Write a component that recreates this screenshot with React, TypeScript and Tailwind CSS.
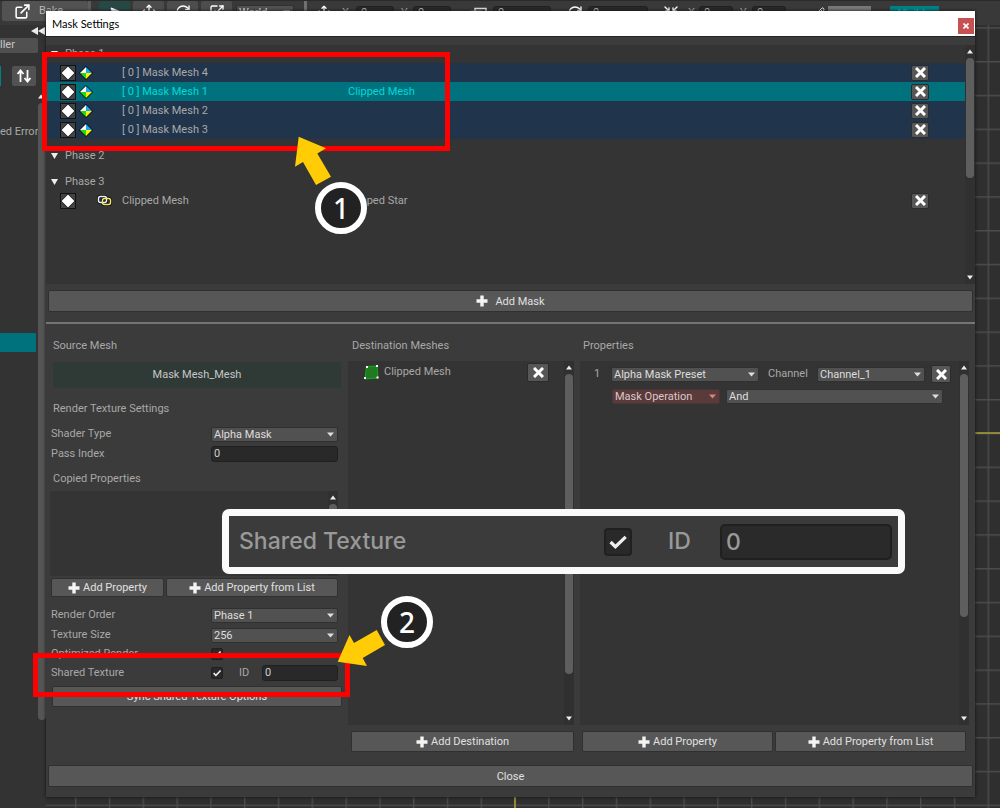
import * as React from "react";
import { ExternalLink, MousePointer2, Move, RotateCw, Scaling, Pencil, RefreshCw, Shrink } from "lucide-react";
import clsx from "clsx";

type Mask = {
    id: number;
    name: string;
    target?: string;
    kind: "shared" | "linked";
    state?: "grouped" | "selected";
};

type Phase = {
    title: string;
    masks: Mask[];
};

const phases: Phase[] = [
    {
        title: "Phase 1",
        masks: [
            { id: 4, name: "[ 0 ] Mask Mesh 4", kind: "shared", state: "grouped" },
            { id: 1, name: "[ 0 ] Mask Mesh 1", target: "Clipped Mesh", kind: "shared", state: "selected" },
            { id: 2, name: "[ 0 ] Mask Mesh 2", kind: "shared", state: "grouped" },
            { id: 3, name: "[ 0 ] Mask Mesh 3", kind: "shared", state: "grouped" },
        ],
    },
    { title: "Phase 2", masks: [] },
    { title: "Phase 3", masks: [{ id: 5, name: "Clipped Mesh", target: "Clipped Star", kind: "linked" }] },
];

const PlusIcon = () => (
    <svg className="size-3 shrink-0" viewBox="0 0 12 12" stroke="#f4f4f4" strokeWidth="3.4">
        <path d="M6 0.5V11.5M0.5 6H11.5" />
    </svg>
);

const CrossIcon = () => (
    <svg className="size-[11px]" viewBox="0 0 11 11" stroke="#fff" strokeWidth="3">
        <path d="M1 1L10 10M10 1L1 10" />
    </svg>
);

const DiamondIcon = () => (
    <svg className="size-4" viewBox="0 0 16 16">
        <rect width="16" height="16" fill="#121212" />
        <rect x="1" y="1" width="14" height="14" fill="#444" />
        <path d="M8 0.500L15.500 8L8 15.500L0.500 8Z" fill="#151515" />
        <path d="M8 1.500L14.500 8L8 14.500L1.500 8Z" fill="#fff" />
    </svg>
);

const SharedIcon = () => (
    <svg className="size-[14px]" viewBox="0 0 14 14">
        <path d="M7 0L14 7L7 14L0 7Z" fill="#0b0b0b" />
        <path d="M7 1V7H1Z" fill="#fff" />
        <path d="M7 1L13 7H7Z" fill="#18a8f0" />
        <path d="M1 7H7V13Z" fill="#1edb12" />
        <path d="M7 7H13L7 13Z" fill="#fff000" />
    </svg>
);

const LinkedIcon = () => (
    <svg className="h-[11px] w-[15px]" viewBox="0 0 15 11" fill="none">
        <rect x="1.500" y="1.500" width="8" height="6" rx="2" stroke="#0b0b0b" strokeWidth="3" />
        <rect x="5.500" y="3.500" width="8" height="6" rx="2" stroke="#0b0b0b" strokeWidth="3" />
        <rect x="1.500" y="1.500" width="8" height="6" rx="2" stroke="#e8f4ff" strokeWidth="1.500" />
        <rect x="5.500" y="3.500" width="8" height="6" rx="2" stroke="#f5e66a" strokeWidth="1.500" />
    </svg>
);

const MeshIcon = () => (
    <svg className="size-[15px]" viewBox="0 0 15 15">
        <path d="M2.500 1.500L13 1L14 13L1 14Z" fill="#1f7a22" stroke="#16a81a" />
        <path d="M2 1h2v2H2zM12 0h2v2h-2zM0 12h2v2H0zM12.500 11.500h2v2h-2z" fill="#fff" />
    </svg>
);

const ScrollBar: React.FC<{ thumb: string }> = ({ thumb }) => (
    <div aria-hidden="true" className="flex w-[10px] shrink-0 flex-col items-center bg-[#303030] pt-1 pb-1">
        <svg className="h-[5px] w-[6px] shrink-0" viewBox="0 0 6 5" fill="#ededed">
            <path d="M3 0.500L6 4.500H0Z" />
        </svg>
        <div className={clsx("mt-1 w-2 rounded-full bg-[#5e5e5e]", thumb)} />
        <svg className="mt-auto h-[5px] w-[6px] shrink-0" viewBox="0 0 6 5" fill="#ededed">
            <path d="M0 0.500H6L3 4.500Z" />
        </svg>
    </div>
);

const Button: React.FC<{ label: string; plus?: boolean; className?: string }> = ({ label, plus, className }) => (
    <button
        className={clsx(
            "flex items-center justify-center rounded-[2px] border border-[#303030] bg-[#575757] leading-none text-[#e0e0e0]",
            className
        )}
    >
        {plus && <PlusIcon />}
        {label}
    </button>
);

const RemoveButton: React.FC<{ label: string; className?: string }> = ({ label, className }) => (
    <button
        aria-label={label}
        className={clsx("flex shrink-0 items-center justify-center rounded-[2px] border border-[#2b2b2b] bg-[#575757]", className)}
    >
        <CrossIcon />
    </button>
);

type DropdownProps = {
    label: string;
    value: string;
    id?: string;
    danger?: boolean;
    className?: string;
};

const Dropdown: React.FC<DropdownProps> = ({ label, value, id, danger, className }) => (
    <div className={clsx("relative", className)}>
        <select
            id={id}
            aria-label={id ? undefined : label}
            defaultValue={value}
            className={clsx(
                "block h-[15px] w-full appearance-none rounded-[2px] border px-[2px] leading-[13px]",
                danger ? "border-[#4a3434] bg-[#593b3c] text-[#dcc8c8]" : "border-[#303030] bg-[#515151] text-[#dedede]"
            )}
        >
            <option>{value}</option>
        </select>
        <svg
            className="pointer-events-none absolute top-[5px] right-1 h-[5px] w-[7px]"
            viewBox="0 0 7 5"
            fill={danger ? "#d98282" : "#dedede"}
        >
            <path d="M0 0.500H7L3.500 4.500Z" />
        </svg>
    </div>
);

const CheckBox: React.FC<{ id: string; large?: boolean }> = ({ id, large }) => (
    <span className={clsx("relative block shrink-0", large ? "size-7" : "size-3")}>
        <input
            id={id}
            type="checkbox"
            defaultChecked
            className={clsx("peer block size-full appearance-none bg-[#292929]", large ? "rounded-[4px] border-2 border-[#202020]" : "rounded-[2px] border border-[#202020]")}
        />
        <svg
            className="pointer-events-none absolute inset-0 hidden size-full peer-checked:block"
            viewBox="0 0 12 12"
            fill="none"
            stroke="#efefef"
            strokeWidth={large ? 1.4 : 1.6}
        >
            <path d={large ? "M2.800 6L4.900 8L9.300 3.800" : "M2.600 6.200L4.900 8.400L9.600 3.500"} />
        </svg>
    </span>
);

const Toolbar = () => {
    const tool = "flex h-[22px] w-[31px] items-center justify-center rounded-[2px]";
    const field = "h-[15px] shrink-0 rounded-[3px] border border-[#1f1f1f] bg-[#292929] px-1 text-[#b5b5b5]";
    return (
        <header className="flex h-[25px] shrink-0 items-start overflow-hidden border-t border-[#2a2a2a] bg-[#393939] text-[11px] text-[#a0a0a0]">
            <button className="ml-[2px] flex h-5 w-[86px] shrink-0 items-center gap-2 rounded-[2px] bg-[#525252] pl-3 text-[#b8b8b8]">
                <ExternalLink className="size-[17px] text-white" strokeWidth={2.2} />
                Bake
            </button>
            <span className="h-5 w-[3px] shrink-0 bg-[#5c5c5c]" />
            <div className="ml-2 flex shrink-0 gap-[3px]">
                <button aria-label="Select" className={clsx(tool, "bg-[#284846] text-white")}><MousePointer2 className="size-3" fill="currentColor" /></button>
                <button aria-label="Move" className={clsx(tool, "bg-[#4d4d4d] text-white")}><Move className="size-4" /></button>
                <button aria-label="Rotate" className={clsx(tool, "bg-[#4d4d4d] text-white")}><RotateCw className="size-4" /></button>
                <button aria-label="Scale" className={clsx(tool, "bg-[#4d4d4d] text-white")}><Scaling className="size-4" /></button>
            </div>
            <Dropdown label="Space" value="World" className="mt-1 ml-1 w-[58px] shrink-0" />
            <span className="ml-[10px] h-5 w-[3px] shrink-0 bg-[#707070]" />
            <Move className="mt-1 ml-[9px] size-4 shrink-0 text-white" />
            <div className="mt-1 ml-[10px] flex shrink-0 items-center">
                <label htmlFor="pos-x" className="w-[14px]">X</label>
                <input id="pos-x" className={clsx(field, "w-[38px]")} defaultValue="0" />
                <label htmlFor="pos-y" className="ml-[7px] w-3">Y</label>
                <input id="pos-y" className={clsx(field, "w-[38px]")} defaultValue="0" />
                <svg className="ml-[19px] h-3 w-[17px] shrink-0" viewBox="0 0 17 12" fill="none" stroke="#ddd" strokeWidth="1.500">
                    <path d="M5 4V1.500H16V8H12M1 4.500H11V11H1Z" />
                </svg>
                <input aria-label="Depth" className={clsx(field, "ml-[6px] w-[58px]")} defaultValue="0" />
                <RefreshCw className="ml-4 size-4 shrink-0 text-white" />
                <input aria-label="Angle" className={clsx(field, "ml-[5px] w-[60px]")} defaultValue="0" />
                <Shrink className="ml-[15px] size-4 shrink-0 text-white" />
                <label htmlFor="scale-x" className="ml-[9px] w-[11px]">X</label>
                <input id="scale-x" className={clsx(field, "w-[34px]")} defaultValue="0" />
                <label htmlFor="scale-y" className="ml-[7px] w-3">Y</label>
                <input id="scale-y" className={clsx(field, "w-[34px]")} defaultValue="0" />
                <Pencil className="ml-[27px] size-3 shrink-0 text-white" />
                <span className="ml-[3px] h-[15px] w-[43px] shrink-0 bg-[#787878]" />
                <button className="ml-[19px] h-[15px] w-[49px] shrink-0 bg-[#008285] leading-none text-[#00d6d6]">Visible</button>
            </div>
        </header>
    );
};

const SidePanel = () => (
    <aside className="flex w-[46px] shrink-0 overflow-hidden bg-[#333] text-[11px] text-[#a8a8a8]">
        <div className="flex min-w-0 flex-1 flex-col">
            <div className="mt-[13px] flex h-[15px] w-full items-center rounded-r-[2px] bg-[#505050] text-[#c8c8c8]">ller</div>
            <div className="mt-[13px] flex h-5 justify-between">
                <span className="w-px bg-[#008285]" />
                <button aria-label="Sort" className="mr-[2px] flex w-6 items-center justify-center rounded-[2px] bg-[#525252]">
                    <svg className="size-4" viewBox="0 0 16 16" fill="none" stroke="#fff" strokeWidth="1.8">
                        <path d="M4.500 14V3M1.500 6L4.500 2.500L7.500 6M11.500 2V13M8.500 10L11.500 13.500L14.500 10" />
                    </svg>
                </button>
            </div>
            <div className="mt-[38px] h-4 leading-4 whitespace-nowrap">ed Error</div>
            <div className="mt-[193px] mr-[2px] h-[19px] bg-[#00727e]" />
        </div>
        <div aria-hidden="true" className="flex w-2 flex-col">
            <svg className="mt-[2px] -ml-2 h-[9px] w-4" viewBox="0 0 16 9" fill="#ededed">
                <path d="M8 0V8L1 4ZM15 0V8L8 4Z" />
            </svg>
            <svg className="mt-[58px] h-[5px] w-[6px]" viewBox="0 0 6 5" fill="#ededed">
                <path d="M3 0.500L6 4.500H0Z" />
            </svg>
            <div className="mt-1 mb-[88px] flex-1 rounded-full bg-[#555]" />
        </div>
    </aside>
);

const SceneGrid = () => (
    <main className="min-w-0 flex-1 bg-[#2f2f2f]">
        <svg className="block size-full" aria-hidden="true">
            <defs>
                <pattern id="grid" x="29" y="36" width="33.8" height="33.8" patternUnits="userSpaceOnUse">
                    <path d="M0.700 0V33.800M0 0.700H33.800" stroke="#4c4c4c" strokeWidth="1.400" />
                </pattern>
            </defs>
            <rect width="100%" height="100%" fill="url(#grid)" />
            <path d="M0 408H2000M469 0V2000" stroke="#a8a236" strokeWidth="1.500" />
        </svg>
    </main>
);

const MaskList = () => (
    <section className="flex h-[239px] shrink-0 bg-[#343434]">
        <div className="min-w-0 flex-1">
            {phases.map((phase) => (
                <div key={phase.title} className="pb-2">
                    <h3 className="flex h-[18px] items-center gap-[7px] pl-[5px] text-[#a8a8a8]">
                        <svg className="h-[6px] w-[7px]" viewBox="0 0 7 6" fill="#ededed">
                            <path d="M0 0H7L3.500 6Z" />
                        </svg>
                        {phase.title}
                    </h3>
                    <ul>
                        {phase.masks.map((mask) => (
                            <li
                                key={mask.id}
                                className={clsx(
                                    "flex h-[19px] items-center pr-9 pl-[14px]",
                                    mask.state === "selected" && "bg-[#00727e] text-[#00d8d8]",
                                    mask.state === "grouped" && "bg-[#20344b]"
                                )}
                            >
                                <button aria-label={`Toggle ${mask.name}`}><DiamondIcon /></button>
                                <span className={clsx("flex w-[46px]", mask.kind === "linked" ? "pl-[21px]" : "pl-[3px]")}>
                                    {mask.kind === "linked" ? <LinkedIcon /> : <SharedIcon />}
                                </span>
                                <span className="w-[226px]">{mask.name}</span>
                                <span className="flex-1">{mask.target}</span>
                                <RemoveButton label={`Remove ${mask.name}`} className="h-4 w-[18px]" />
                            </li>
                        ))}
                    </ul>
                </div>
            ))}
        </div>
        <ScrollBar thumb="h-[120px]" />
    </section>
);

const SourceColumn = () => (
    <section className="flex w-[302px] shrink-0 flex-col pr-[10px] pl-[5px]">
        <h2 className="h-[38px] pt-[13px] pl-[2px]">Source Mesh</h2>
        <div className="-mr-[3px] ml-[2px] flex h-[26px] items-center justify-center bg-[#2f3a36] text-[#c6c6c6]">Mask Mesh_Mesh</div>
        <h2 className="mt-3 mb-[6px] h-[18px] pl-[2px] leading-[18px]">Render Texture Settings</h2>
        <div className="flex h-5 items-center">
            <label htmlFor="shader-type" className="w-40">Shader Type</label>
            <Dropdown id="shader-type" label="Shader Type" value="Alpha Mask" className="flex-1" />
        </div>
        <div className="flex h-5 items-center">
            <label htmlFor="pass-index" className="w-40">Pass Index</label>
            <input id="pass-index" defaultValue="0" className="h-4 min-w-0 flex-1 rounded-[3px] border border-[#202020] bg-[#292929] px-[2px] text-[#cfcfcf]" />
        </div>
        <h2 className="mt-[6px] h-[18px] pl-[2px] leading-[18px]">Copied Properties</h2>
        <div className="mt-[3px] -ml-px flex h-[85px] justify-end overflow-hidden bg-[#343434]">
            <ScrollBar thumb="h-[48px]" />
        </div>
        <div className="mt-[2px] flex gap-[2px]">
            <Button plus label="Add Property" className="h-[19px] w-[113px] gap-[3px]" />
            <Button plus label="Add Property from List" className="h-[19px] flex-1 gap-[3px]" />
        </div>
        <div className="mt-2 flex h-5 items-center">
            <label htmlFor="render-order" className="w-40">Render Order</label>
            <Dropdown id="render-order" label="Render Order" value="Phase 1" className="flex-1" />
        </div>
        <div className="flex h-5 items-center">
            <label htmlFor="texture-size" className="w-40">Texture Size</label>
            <Dropdown id="texture-size" label="Texture Size" value="256" className="flex-1" />
        </div>
        <div className="flex h-[18px] items-center">
            <label htmlFor="optimized-render" className="w-40">Optimized Render</label>
            <CheckBox id="optimized-render" />
        </div>
        <div className="flex h-5 items-center">
            <label htmlFor="shared-texture" className="w-40">Shared Texture</label>
            <CheckBox id="shared-texture" />
            <label htmlFor="shared-id" className="ml-4 w-[23px]">ID</label>
            <input id="shared-id" defaultValue="0" className="h-4 min-w-0 flex-1 rounded-[3px] border border-[#202020] bg-[#292929] px-[2px] text-[#cfcfcf]" />
        </div>
        <Button label="Sync Shared Texture Options" className="mt-[3px] -mr-[4px] ml-px h-[21px]" />
    </section>
);

const DestinationColumn = () => (
    <section className="flex w-[234px] shrink-0 flex-col pr-[8px]">
        <h2 className="h-[37px] pt-[13px] pl-1">Destination Meshes</h2>
        <div className="flex flex-1 bg-[#343434]">
            <div className="flex h-[22px] flex-1 items-center pr-[15px] pl-4">
                <MeshIcon />
                <span className="flex-1 pl-[5px]">Clipped Mesh</span>
                <RemoveButton label="Remove Clipped Mesh" className="h-[19px] w-[22px]" />
            </div>
            <ScrollBar thumb="h-[300px]" />
        </div>
        <Button plus label="Add Destination" className="mt-[6px] ml-[3px] h-[21px] gap-[3px]" />
    </section>
);

const PropertiesColumn = () => (
    <section className="flex min-w-0 flex-1 flex-col pr-[6px]">
        <h2 className="h-[37px] pt-[13px] pl-px">Properties</h2>
        <div className="-ml-[2px] flex flex-1 bg-[#343434]">
            <div className="min-w-0 flex-1 pt-[2px] pl-[14px]">
                <div className="flex h-[22px] items-center pr-2">
                    <span className="w-[17px]">1</span>
                    <Dropdown label="Preset" value="Alpha Mask Preset" className="w-[148px]" />
                    <label htmlFor="channel" className="w-[58px] pl-[9px]">Channel</label>
                    <Dropdown id="channel" label="Channel" value="Channel_1" className="flex-1" />
                    <RemoveButton label="Remove property" className="ml-[6px] h-[18px] w-5" />
                </div>
                <div className="flex h-[22px] items-center gap-[6px] pr-4 pl-[18px]">
                    <Dropdown danger label="Property type" value="Mask Operation" className="w-[108px]" />
                    <Dropdown label="Operation" value="And" className="flex-1" />
                </div>
            </div>
            <ScrollBar thumb="h-[243px]" />
        </div>
        <div className="mt-[6px] flex gap-[2px] pr-[3px]">
            <Button plus label="Add Property" className="h-[21px] flex-1 gap-[3px]" />
            <Button plus label="Add Property from List" className="h-[21px] flex-1 gap-[3px]" />
        </div>
    </section>
);

const MaskDialog = () => (
    <div
        role="dialog"
        aria-label="Mask Settings"
        className="absolute top-[11px] right-[25px] bottom-[11px] left-[46px] flex flex-col bg-[#3b3b3b] text-[11px] leading-[18px] text-[#a8a8a8] shadow-[0_0_3px_#111]"
    >
        <div className="flex h-[25px] shrink-0 items-center justify-between bg-white pr-px pl-[6px] font-['Lato',sans-serif] text-black">
            <h1>Mask Settings</h1>
            <button aria-label="Close window" className="mt-1 flex size-4 items-center justify-center bg-[#c75050]">
                <svg className="size-[6px]" viewBox="0 0 6 6" stroke="#fff" strokeWidth="1.600">
                    <path d="M0.500 0.500L5.500 5.500M5.500 0.500L0.500 5.500" />
                </svg>
            </button>
        </div>
        <div className="h-[9px] shrink-0 border-t border-[#242424] bg-[#3c3c3c]" />
        <MaskList />
        <div className="shrink-0 border-b-2 border-[#757575] px-[2px] pt-[6px] pb-[10px]">
            <Button plus label="Add Mask" className="h-[22px] w-full gap-[7px]" />
        </div>
        <div className="flex min-h-0 flex-1">
            <SourceColumn />
            <DestinationColumn />
            <PropertiesColumn />
        </div>
        <div className="shrink-0 px-[2px] pt-[13px] pb-[10px]">
            <Button label="Close" className="h-[22px] w-full" />
        </div>
    </div>
);

const Annotations = () => (
    <>
        <div className="pointer-events-none absolute top-[52px] left-[42px] h-[99px] w-[408px] border-[5px] border-[#ff0000]" />
        <div className="pointer-events-none absolute top-[653px] left-[33px] h-[44px] w-[317px] border-[5px] border-[#ff0000]" />
        <svg className="pointer-events-none absolute top-[136px] left-[294px] h-[50px] w-[38px]" viewBox="294 136 38 50" fill="#ffcc05">
            <path d="M298.700 136.700L326 148.300L317.300 153.500L331 176.700L316 185L303 162L295 166.700Z" />
        </svg>
        <svg className="pointer-events-none absolute top-[629px] left-[337px] h-[38px] w-[50px]" viewBox="337 629 50 38" fill="#ffcc05">
            <path d="M337.700 661.700L349.500 635L354 643L376.700 630L385 645L362.700 658L367 666Z" />
        </svg>
        <div className="absolute top-[182px] left-[315px] flex size-[52px] items-center justify-center rounded-full border-[6px] border-white bg-[#222] font-['Noto_Sans'] text-[28px] leading-none font-medium text-white">1</div>
        <div className="absolute top-[596px] left-[381px] flex size-[52px] items-center justify-center rounded-full border-[6px] border-white bg-[#222] font-['Noto_Sans'] text-[28px] leading-none font-medium text-white">2</div>
        <div className="absolute top-[509px] left-[222px] flex h-[65px] w-[683px] items-center rounded-[7px] border-[7px] border-[#fafafa] bg-[#3b3b3b] pr-[6px] pl-[10px] font-['Inter',sans-serif] text-[23px] font-medium text-[#999]">
            <label htmlFor="zoom-shared" className="flex-1">Shared Texture</label>
            <CheckBox id="zoom-shared" large />
            <label htmlFor="zoom-id" className="ml-9 w-[52px]">ID</label>
            <input id="zoom-id" defaultValue="0" className="h-9 w-[172px] rounded-[5px] border-2 border-[#202020] bg-[#2a2a2a] px-1" />
        </div>
    </>
);

export default function App() {
    return (
        <div className="relative flex h-screen flex-col overflow-hidden bg-[#333] font-['Roboto',sans-serif]">
            <Toolbar />
            <div className="flex min-h-0 flex-1">
                <SidePanel />
                <SceneGrid />
            </div>
            <MaskDialog />
            <Annotations />
        </div>
    );
}
